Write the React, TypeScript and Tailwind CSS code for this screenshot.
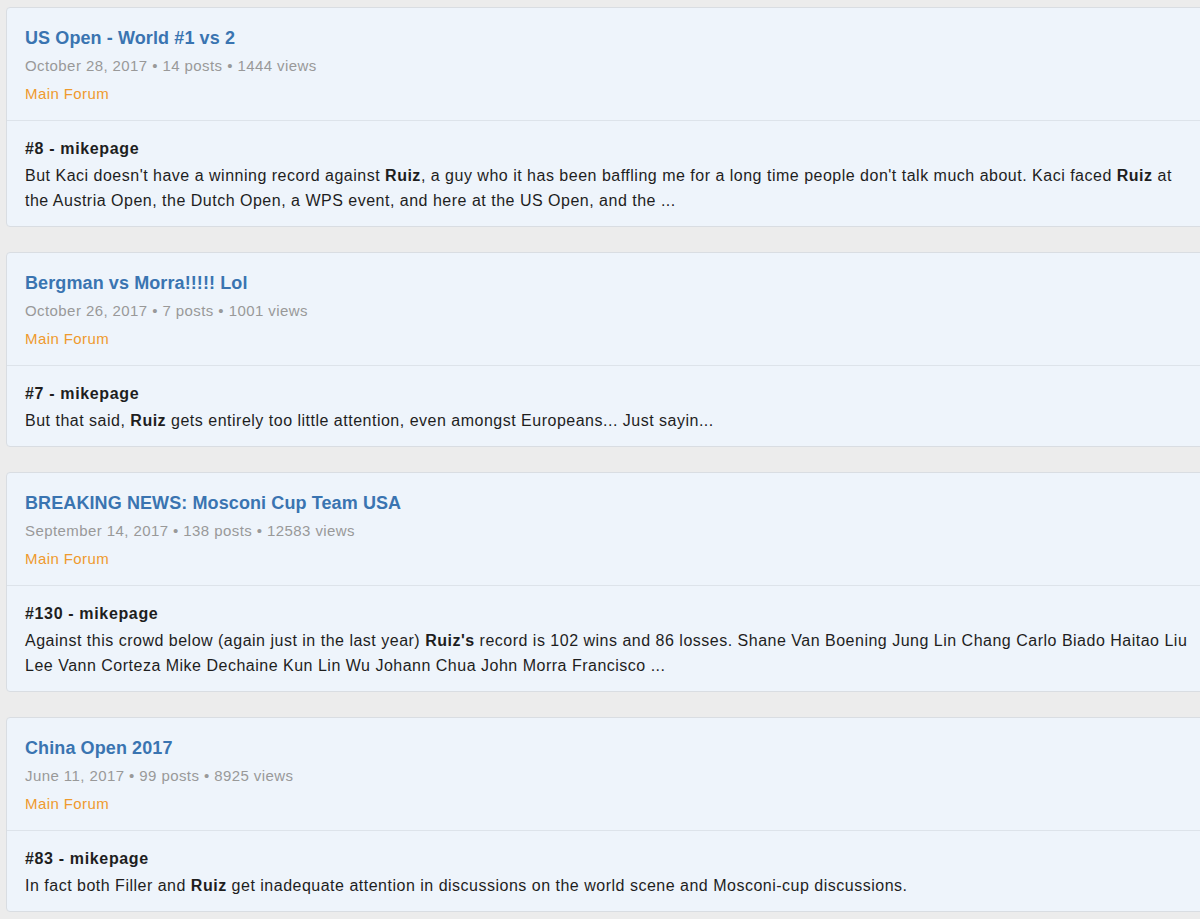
import React from "react";

type Post = {
  title: string;
  meta: string;
  num: string;
  body: React.ReactNode;
};

const posts: Post[] = [
  {
    title: "US Open - World #1 vs 2",
    meta: "October 28, 2017 • 14 posts • 1444 views",
    num: "#8",
    body: (
      <>
        But Kaci doesn't have a winning record against <b>Ruiz</b>, a guy who it has been baffling me for a long time people don't talk much about. Kaci faced <b>Ruiz</b> at the Austria Open, the Dutch Open, a WPS event, and here at the US Open, and the ...
      </>
    ),
  },
  {
    title: "Bergman vs Morra!!!!! Lol",
    meta: "October 26, 2017 • 7 posts • 1001 views",
    num: "#7",
    body: (
      <>
        But that said, <b>Ruiz</b> gets entirely too little attention, even amongst Europeans... Just sayin...
      </>
    ),
  },
  {
    title: "BREAKING NEWS: Mosconi Cup Team USA",
    meta: "September 14, 2017 • 138 posts • 12583 views",
    num: "#130",
    body: (
      <>
        Against this crowd below (again just in the last year) <b>Ruiz's</b> record is 102 wins and 86 losses. Shane Van Boening Jung Lin Chang Carlo Biado Haitao Liu Lee Vann Corteza Mike Dechaine Kun Lin Wu Johann Chua John Morra Francisco ...
      </>
    ),
  },
  {
    title: "China Open 2017",
    meta: "June 11, 2017 • 99 posts • 8925 views",
    num: "#83",
    body: (
      <>
        In fact both Filler and <b>Ruiz</b> get inadequate attention in discussions on the world scene and Mosconi-cup discussions.
      </>
    ),
  },
];

export default function App() {
  return (
    <div
      className="w-[1200px] h-[919px] overflow-hidden bg-[#ececec] pt-[7px] pl-[6px]"
      style={{ fontFamily: '"Liberation Sans", Arial, Helvetica, sans-serif' }}
    >
      <div className="flex flex-col gap-[25px] w-[1212px]">
        {posts.map((p) => (
          <div
            key={p.title}
            className="bg-[#eef4fb] border border-[#d9dde2] rounded-[4px]"
          >
            <div className="px-[18px] pt-[16px] pb-[12px] border-b border-[#dde3ea]">
              <div className="text-[18px] leading-[28px] font-bold text-[#3a74b1] tracking-[0.1px]">
                {p.title}
              </div>
              <div className="text-[15px] leading-[28px] text-[#999999] tracking-[0.42px]">
                {p.meta}
              </div>
              <div className="text-[15px] leading-[28px] text-[#ee9a2e] tracking-[0.42px]">
                Main Forum
              </div>
            </div>
            <div className="px-[18px] pt-[15px] pb-[13px] text-[#1e1e1e]">
              <div className="text-[16px] leading-[25px] font-bold mb-[2px] tracking-[0.65px]">
                {p.num} - mikepage
              </div>
              <div className="text-[16px] leading-[25px] tracking-[0.5px]">{p.body}</div>
            </div>
          </div>
        ))}
      </div>
    </div>
  );
}
